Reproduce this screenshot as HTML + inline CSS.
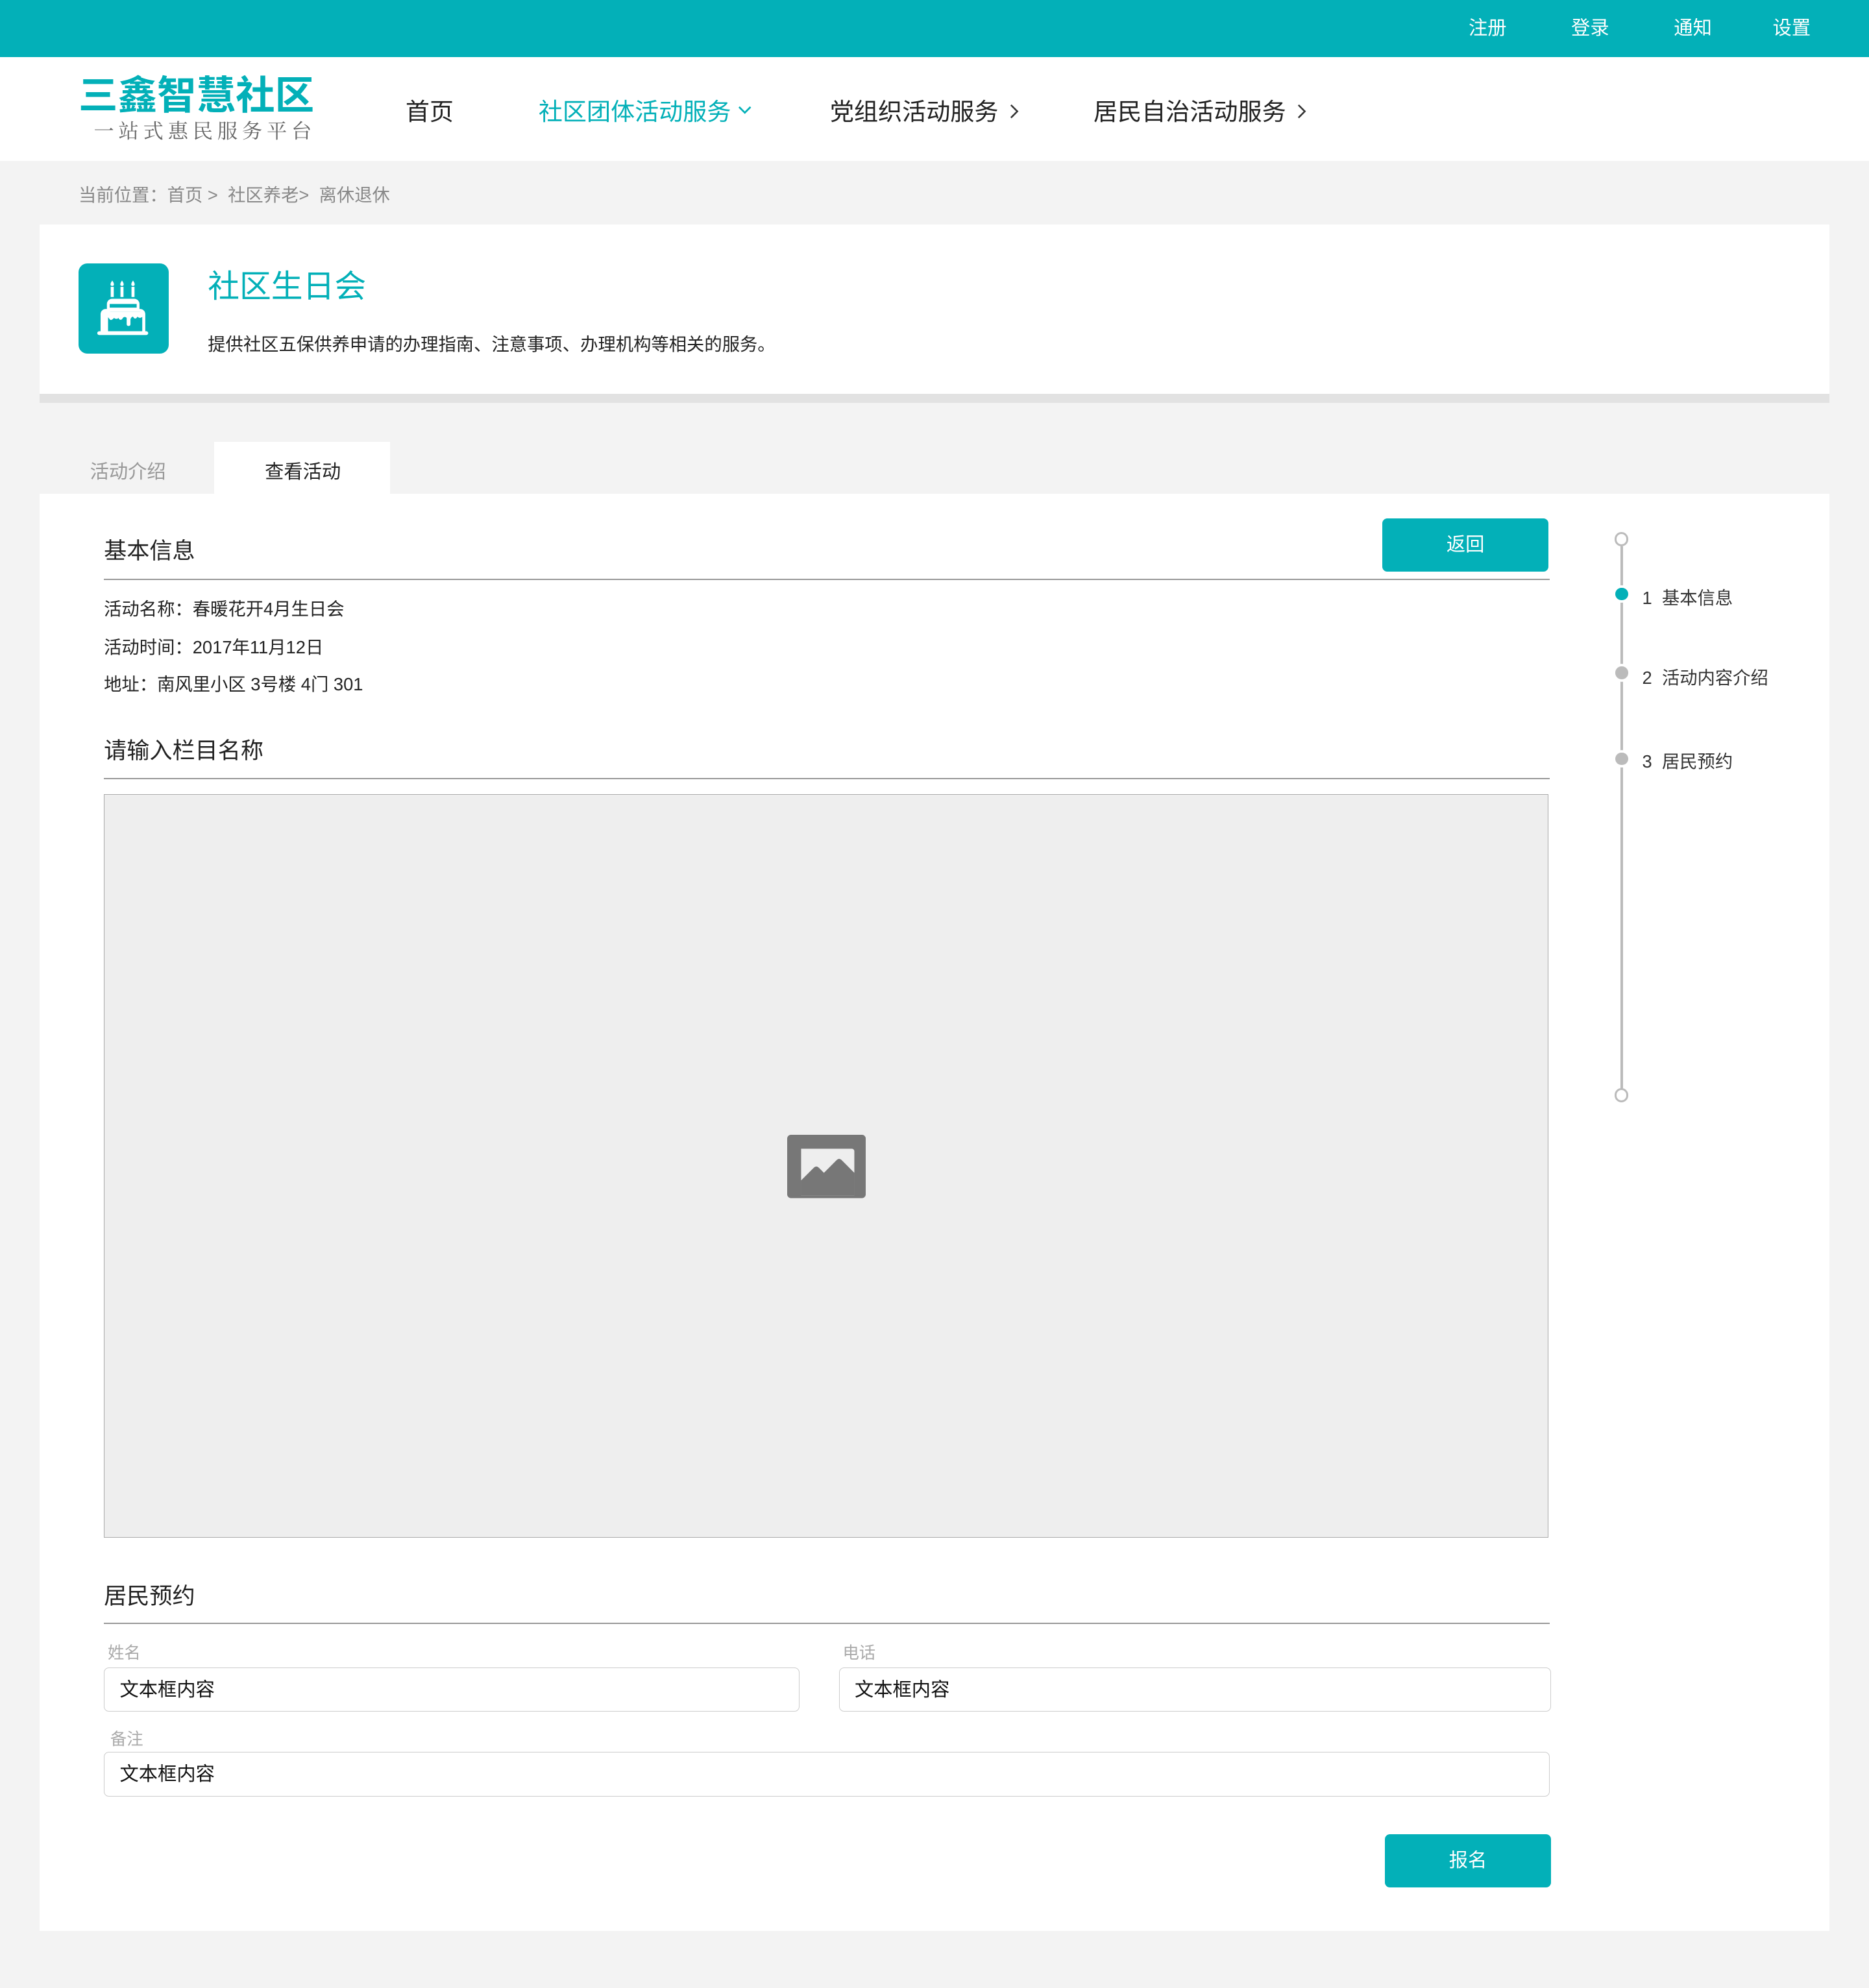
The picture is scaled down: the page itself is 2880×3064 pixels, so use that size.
<!DOCTYPE html>
<html><head><meta charset="utf-8"><style>
html,body{margin:0;padding:0;}
body{width:2880px;height:3062px;overflow:hidden;background:#f3f3f3;}
#w{position:relative;width:1475px;height:1569px;zoom:1.952542;font-family:"Liberation Sans","Noto Sans CJK SC",sans-serif;color:#333;}
.a{position:absolute;white-space:nowrap;}
.t{line-height:1;margin-top:1px;}
.bar{background:#03b0b8;}
.btn{position:absolute;background:#03b0b8;color:#fff;border-radius:4px;font-size:15px;text-align:center;}
.inp{position:absolute;border:1px solid #ccc;border-radius:4px;background:#fff;box-sizing:border-box;font-size:15px;color:#111;padding-left:12px;}
.hl{position:absolute;height:1px;background:#999;}
</style></head><body><div id="w">
<div class="a bar" style="left:0;top:0;width:1475px;height:45px"></div>
<div class="a t" style="left:1159px;top:14px;color:#fff;font-size:15px">注册</div>
<div class="a t" style="left:1240px;top:14px;color:#fff;font-size:15px">登录</div>
<div class="a t" style="left:1321px;top:14px;color:#fff;font-size:15px">通知</div>
<div class="a t" style="left:1399px;top:14px;color:#fff;font-size:15px">设置</div>
<div class="a" style="left:0;top:45px;width:1475px;height:82px;background:#fff"></div>
<div class="a t" style="left:62px;top:59px;font-size:31px;font-weight:bold;color:#03b0b8;">三鑫智慧社区</div>
<div class="a t" style="left:74px;top:93px;font-size:16px;color:#666;letter-spacing:3.5px;font-family:'Noto Serif CJK SC',serif">一站式惠民服务平台</div>
<div class="a t" style="left:320px;top:78px;font-size:19px;color:#222">首页</div>
<div class="a t" style="left:425px;top:78px;font-size:19px;color:#03b0b8">社区团体活动服务</div>
<svg class="a" style="left:582px;top:82px" width="12" height="10"><path d="M1.5 2.5 L6 7 L10.5 2.5" stroke="#03b0b8" stroke-width="1.4" fill="none"/></svg>
<div class="a t" style="left:655px;top:78px;font-size:19px;color:#222">党组织活动服务</div>
<svg class="a" style="left:795px;top:81px" width="10" height="14"><path d="M3 2 L8 7 L3 12" stroke="#333" stroke-width="1.3" fill="none"/></svg>
<div class="a t" style="left:863px;top:78px;font-size:19px;color:#222">居民自治活动服务</div>
<svg class="a" style="left:1022px;top:81px" width="10" height="14"><path d="M3 2 L8 7 L3 12" stroke="#333" stroke-width="1.3" fill="none"/></svg>
<div class="a t" style="left:62px;top:146px;font-size:14px;color:#888">当前位置：首页 &gt;&nbsp; 社区养老&gt;&nbsp; 离休退休</div>
<div class="a" style="left:31px;top:177px;width:1413px;height:134px;background:#fff"></div>
<div class="a" style="left:31px;top:311px;width:1413px;height:7px;background:#e2e2e2"></div>
<div class="a" style="left:62px;top:208px;width:71px;height:71px;background:#03b0b8;border-radius:7px"></div>
<svg class="a" style="left:62px;top:208px" width="71" height="71" viewBox="0 0 71 71">
<g fill="#fff">
<path d="M26.6 13.5c-1.8 2.4-1.8 4.3 0 4.3s1.8-1.9 0-4.3zM34.3 13.5c-1.8 2.4-1.8 4.3 0 4.3s1.8-1.9 0-4.3zM43 13.5c-1.8 2.4-1.8 4.3 0 4.3s1.8-1.9 0-4.3z"/>
<rect x="25.4" y="18.5" width="2.4" height="8"/><rect x="33.1" y="18.5" width="2.4" height="8"/><rect x="41.8" y="18.5" width="2.4" height="8"/>
<path d="M23.5 36v-4a3 3 0 0 1 3-3h17.5a3 3 0 0 1 3 3v4z" fill="none" stroke="#fff" stroke-width="2.2"/>
<rect x="24" y="29" width="22" height="3"/>
<path d="M17.4 54v-14a4 4 0 0 1 4-4h27.3a4 4 0 0 1 4 4v14h-2.4v-14a2 2 0 0 0-2-2h-23a2 2 0 0 0-2 2v14z"/>
<path d="M19.5 38h31v4c-1.5 1.5-3 1-4 0-1 2-2.5 2-3.5 0-1 0-1.5 1-2 2v4c0 1.8-3 1.8-3 0v-5c-1-1-2-1-3 0-1 2-2.5 2-3.5 0-1 1-2 1-3.5 0-1 1-2 2-3 1.5z"/>
<rect x="14.8" y="53.5" width="40.2" height="3" rx="1.5"/></g></svg>
<div class="a t" style="left:164px;top:213px;font-size:25px;color:#03b0b8">社区生日会</div>
<div class="a t" style="left:164px;top:264px;font-size:14px;color:#222">提供社区五保供养申请的办理指南、注意事项、办理机构等相关的服务。</div>
<div class="a t" style="left:71px;top:364px;font-size:15px;color:#999">活动介绍</div>
<div class="a" style="left:169px;top:349px;width:139px;height:41px;background:#fff"></div>
<div class="a t" style="left:209px;top:364px;font-size:15px;color:#222">查看活动</div>
<div class="a" style="left:31px;top:390px;width:1413px;height:1134px;background:#fff"></div>
<div class="a t" style="left:82px;top:425px;font-size:18px;color:#222">基本信息</div>
<div class="hl" style="left:82px;top:457px;width:1141px"></div>
<div class="btn" style="left:1091px;top:409px;width:131px;height:42px;line-height:42px">返回</div>
<div class="a t" style="left:82px;top:473px;font-size:14px;color:#222">活动名称：春暖花开4月生日会</div>
<div class="a t" style="left:82px;top:503px;font-size:14px;color:#222">活动时间：2017年11月12日</div>
<div class="a t" style="left:82px;top:532px;font-size:14px;color:#222">地址：南风里小区 3号楼 4门 301</div>
<div class="a t" style="left:82px;top:583px;font-size:18px;color:#222">请输入栏目名称</div>
<div class="hl" style="left:82px;top:614px;width:1141px"></div>
<div class="a" style="left:82px;top:627px;width:1139px;height:586px;background:#eee;border:1px solid #aaa"></div>
<svg class="a" style="left:621px;top:896px" width="62" height="50" viewBox="0 0 62 50"><rect x="0" y="0" width="62" height="50" rx="3" fill="#777"/><path d="M11 11h40a2 2 0 0 1 2 2v35h-42z" fill="#eee"/><path d="M11 48L53 48V30L43 20Q41 18 39 20L29 30L25 26Q23 24 21 26L11 36Z" fill="#777"/></svg>
<div class="a t" style="left:82px;top:1250px;font-size:18px;color:#222">居民预约</div>
<div class="hl" style="left:82px;top:1281px;width:1141px"></div>
<div class="a t" style="left:85px;top:1298px;font-size:13px;color:#aaa">姓名</div>
<div class="a t" style="left:665px;top:1298px;font-size:13px;color:#aaa">电话</div>
<div class="inp" style="left:82px;top:1316px;width:549px;height:35px;line-height:35px">文本框内容</div>
<div class="inp" style="left:662px;top:1316px;width:562px;height:35px;line-height:35px">文本框内容</div>
<div class="a t" style="left:87px;top:1366px;font-size:13px;color:#aaa">备注</div>
<div class="inp" style="left:82px;top:1383px;width:1141px;height:35px;line-height:35px">文本框内容</div>
<div class="btn" style="left:1093px;top:1448px;width:131px;height:42px;line-height:42px">报名</div>
<div class="a" style="left:1279px;top:431px;width:2px;height:430px;background:#bbb"></div>
<div class="a" style="left:1274px;top:420px;width:8px;height:8px;border:2px solid #bbb;border-radius:50%;background:#fff"></div>
<div class="a" style="left:1274px;top:859px;width:8px;height:8px;border:2px solid #bbb;border-radius:50%;background:#fff"></div>
<div class="a" style="left:1275px;top:464px;width:10px;height:10px;border-radius:50%;background:#03b0b8;box-shadow:0 0 0 2px #fff"></div>
<div class="a" style="left:1275px;top:526px;width:10px;height:10px;border-radius:50%;background:#bbb;box-shadow:0 0 0 2px #fff"></div>
<div class="a" style="left:1275px;top:594px;width:10px;height:10px;border-radius:50%;background:#bbb;box-shadow:0 0 0 2px #fff"></div>
<div class="a t" style="left:1296px;top:464px;font-size:14px;color:#333">1&nbsp; 基本信息</div>
<div class="a t" style="left:1296px;top:527px;font-size:14px;color:#333">2&nbsp; 活动内容介绍</div>
<div class="a t" style="left:1296px;top:593px;font-size:14px;color:#333">3&nbsp; 居民预约</div>
</div></body></html>
